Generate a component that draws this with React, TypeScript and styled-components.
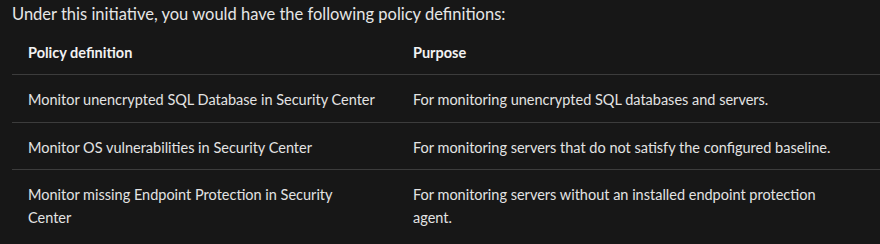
import styled, { createGlobalStyle } from 'styled-components';

const GlobalStyle = createGlobalStyle`
  html, body {
    margin: 0;
    padding: 0;
    background: #171717;
  }
  body {
    font-family: Lato, "Noto Sans", sans-serif;
    color: #e3e3e3;
  }
`

const Page = styled.div`
  padding: 3px 0 0 12px;
  overflow: hidden;
`

const Intro = styled.p`
  margin: 0 0 2.5px;
  font-size: 16.5px;
  line-height: 22px;
  color: #e6e6e6;
`

const Table = styled.table`
  border-collapse: collapse;
  table-layout: fixed;
  width: 868px;
  font-size: 14.5px;
  line-height: 22.5px;
`

const HeadCell = styled.th`
  text-align: left;
  font-weight: 700;
  color: #f2f2f2;
  padding: 14px 16px 10px;
  border-bottom: 1px solid #3c3c3c;
`

const Row = styled.tr<{ $last?: boolean }>`
  border-bottom: ${(p) => (p.$last ? 'none' : '1px solid #3c3c3c')};
`

const Cell = styled.td`
  vertical-align: top;
  padding: 14px 16px 10px;
`

const NameCol = styled.col`
  width: 385px;
`

// keeps the long names and purposes wrapping inside their columns
const Text = styled.div<{ $max: number }>`
  max-width: ${(p) => p.$max}px;
`

const policies = [
  {
    name: 'Monitor unencrypted SQL Database in Security Center',
    purpose: 'For monitoring unencrypted SQL databases and servers.',
  },
  {
    name: 'Monitor OS vulnerabilities in Security Center',
    purpose: 'For monitoring servers that do not satisfy the configured baseline.',
  },
  {
    name: 'Monitor missing Endpoint Protection in Security Center',
    purpose: 'For monitoring servers without an installed endpoint protection agent.',
  },
]

const App = () => (
  <>
    <GlobalStyle />
    <Page>
      <Intro>Under this initiative, you would have the following policy definitions:</Intro>
      <Table>
        <colgroup>
          <NameCol />
          <col />
        </colgroup>
        <thead>
          <tr>
            <HeadCell>Policy definition</HeadCell>
            <HeadCell>Purpose</HeadCell>
          </tr>
        </thead>
        <tbody>
          {policies.map((p, i) => (
            <Row key={p.name} $last={i === policies.length - 1}>
              <Cell>
                <Text $max={349}>{p.name}</Text>
              </Cell>
              <Cell>
                <Text $max={440}>{p.purpose}</Text>
              </Cell>
            </Row>
          ))}
        </tbody>
      </Table>
    </Page>
  </>
)

export default App
